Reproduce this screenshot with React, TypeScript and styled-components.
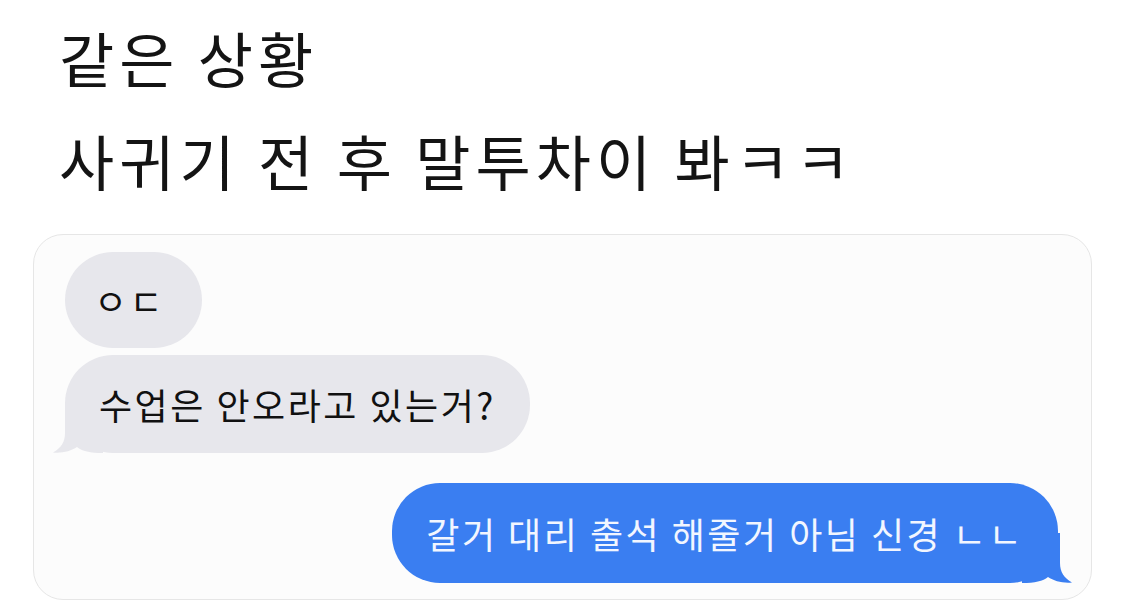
import React from "react";
import styled, { createGlobalStyle } from "styled-components";

const Global = createGlobalStyle`
  html, body { margin: 0; padding: 0; background: #ffffff; }
  body { font-family: "Noto Sans CJK KR", "Noto Sans", sans-serif; overflow: hidden; }
`;

const Page = styled.div`
  width: 1125px;
  height: 600px;
  overflow: hidden;
  background: #ffffff;
  display: flex;
  flex-direction: column;
  padding-top: 5px;
  box-sizing: border-box;
`;

const Title = styled.h1`
  margin: 0;
  padding-left: 59px;
  font-family: "Noto Sans CJK KR", sans-serif;
  font-weight: 400;
  font-size: 60px;
  line-height: 103px;
  color: #141414;
  letter-spacing: 5px;
`;

const Line = styled.div``;

const Card = styled.div`
  margin: 23px 0 0 33px;
  width: 1059px;
  height: 420px;
  box-sizing: border-box;
  border: 1.5px solid #e6e6e6;
  border-radius: 30px;
  background: #fcfcfc;
  padding: 17px 33px 0 31px;
  display: flex;
  flex-direction: column;
`;

const Row = styled.div<{ $mine?: boolean; $gap?: number }>`
  display: flex;
  justify-content: ${(p) => (p.$mine ? "flex-end" : "flex-start")};
  margin-top: ${(p) => p.$gap ?? 0}px;
`;

const Bubble = styled.div<{ $mine?: boolean; $h: number }>`
  position: relative;
  height: ${(p) => p.$h}px;
  display: flex;
  align-items: center;
  padding: 0 34px 0 34px;
  border-radius: 48px;
  background: ${(p) => (p.$mine ? "#3a7ef1" : "#e7e7ec")};
  color: ${(p) => (p.$mine ? "#f2f6ff" : "#111111")};
  font-family: "Noto Sans CJK KR", sans-serif;
  font-size: 36px;
  letter-spacing: 2.5px;
  line-height: 1;
  white-space: nowrap;
`;

const Text = styled.span`
  position: relative;
`;

const Tail = styled.svg<{ $mine?: boolean }>`
  position: absolute;
  bottom: 0;
  width: 50px;
  height: 50px;
  ${(p) => (p.$mine ? "right: -14px; transform: scaleX(-1);" : "left: -12px;")}
`;

const BubbleTail = ({ mine, color }: { mine?: boolean; color: string }) => (
  <Tail $mine={mine} viewBox="0 0 50 50">
    <path
      d="M12 0 L12 30 C12 39 8 45 0 49.5 C9 50.5 18 48 24 44 C29 48 37 50 50 50 L50 0 Z"
      fill={color}
    />
  </Tail>
);

export default function App() {
  return (
    <>
      <Global />
      <Page>
        <Title>
          <Line>같은 상황</Line>
          <Line>사귀기 전 후 말투차이 봐ㅋㅋ</Line>
        </Title>
        <Card>
          <Row>
            <Bubble $h={96} style={{ paddingLeft: 29, paddingRight: 37 }}>
              <Text>ㅇㄷ</Text>
            </Bubble>
          </Row>
          <Row $gap={7}>
            <Bubble $h={98}>
              <BubbleTail color="#e7e7ec" />
              <Text>수업은 안오라고 있는거?</Text>
            </Bubble>
          </Row>
          <Row $mine $gap={30}>
            <Bubble $mine $h={100}>
              <BubbleTail mine color="#3a7ef1" />
              <Text>갈거 대리 출석 해줄거 아님 신경 ㄴㄴ</Text>
            </Bubble>
          </Row>
        </Card>
      </Page>
    </>
  );
}
